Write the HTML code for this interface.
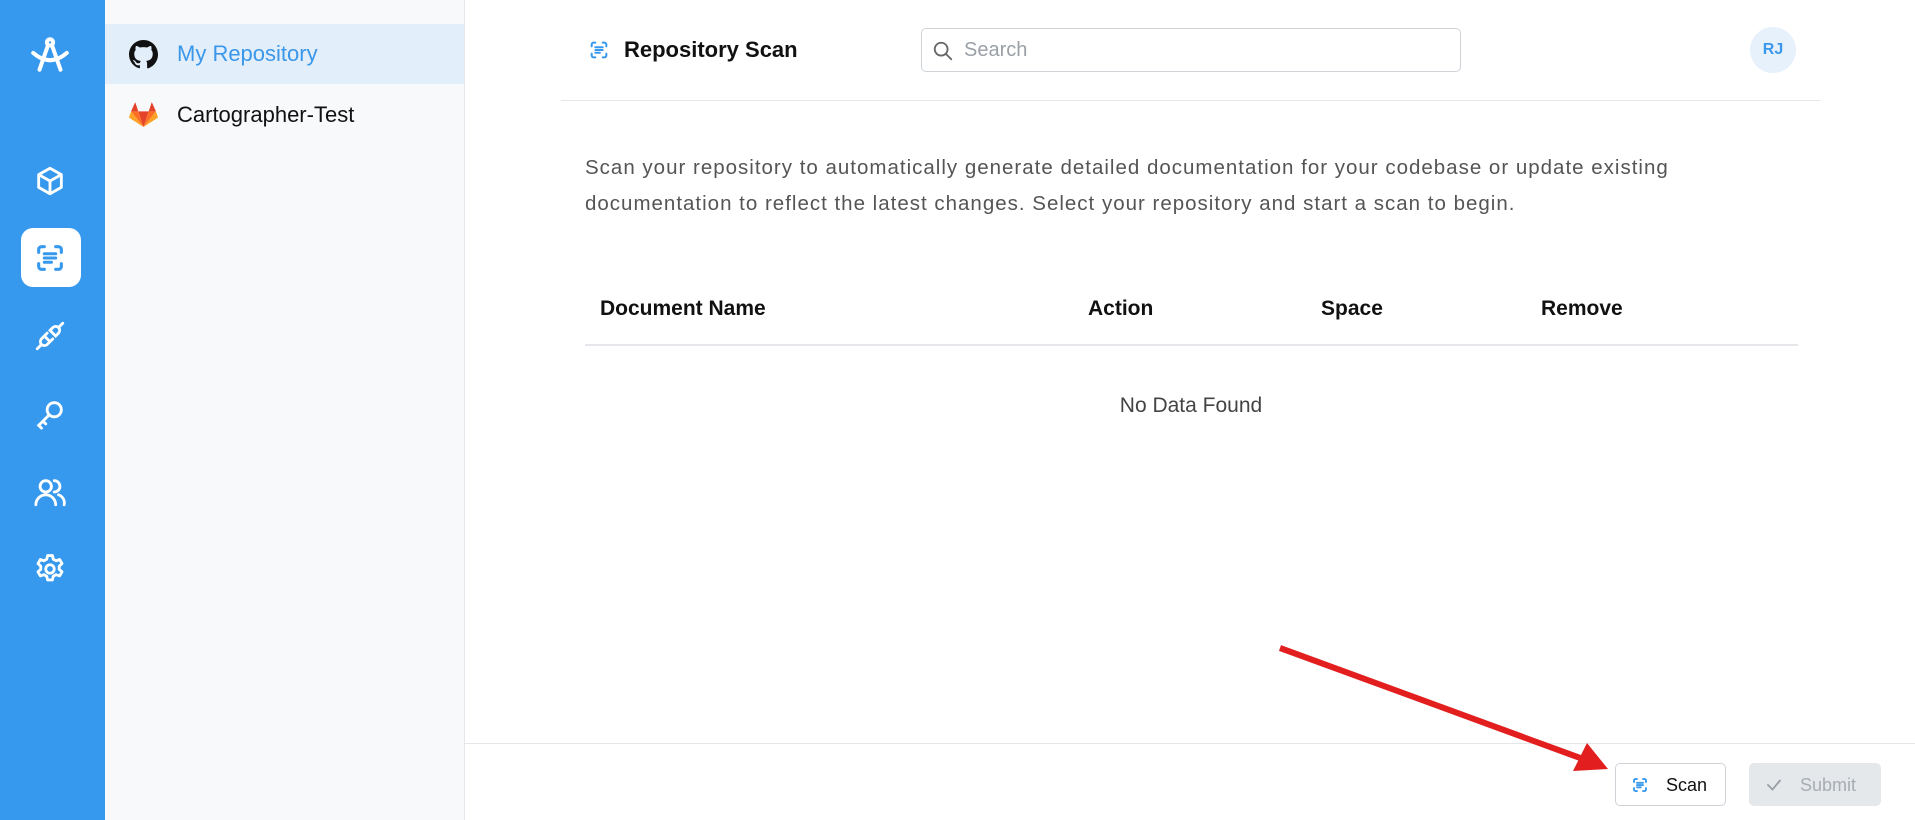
<!DOCTYPE html>
<html><head><meta charset="utf-8"><style>
*{box-sizing:border-box;margin:0;padding:0}
body{width:1915px;height:820px;overflow:hidden;background:#fff;font-family:"Liberation Sans",sans-serif;position:relative}
.abs{position:absolute}
.sb{left:0;top:0;width:105px;height:820px;background:#3799ee}
.ic{position:absolute;left:33px;width:34px;height:34px}
.panel{left:105px;top:0;width:360px;height:820px;background:#f7f9fb;border-right:1px solid #e3e6ea}
.th{position:absolute;top:297px;font-size:21px;font-weight:bold;color:#111}
</style></head><body>
<div class="abs sb">
<svg class="ic" style="top:34px;left:29px;width:42px;height:42px" viewBox="0 0 40 40" fill="none" stroke="#fff" stroke-width="3.8" stroke-linecap="round"><circle cx="20" cy="8" r="3"/><path d="M18 11 L10 34 M22 11 L30 34 M4 18 Q20 32 36 18"/></svg>
<svg class="ic" style="top:164px" viewBox="0 0 24 24" fill="none" stroke="#fff" stroke-width="2" stroke-linejoin="round"><path d="M12 3l8 4.5v9L12 21l-8-4.5v-9z M4 7.5l8 4.5 8-4.5 M12 12v9"/></svg>
<div class="abs" style="left:21px;top:228px;width:60px;height:59px;background:#fff;border-radius:12px"></div>
<svg class="ic" style="top:241px" viewBox="0 0 24 24" fill="none" stroke="#3799ee" stroke-width="2.2" stroke-linecap="round"><path d="M4 8V6a2 2 0 0 1 2-2h2M16 4h2a2 2 0 0 1 2 2v2M20 16v2a2 2 0 0 1-2 2h-2M8 20H6a2 2 0 0 1-2-2v-2M8 9h8M8 12h8M8 15h5"/></svg>
<svg class="ic" style="top:319px" viewBox="0 0 24 24" fill="none" stroke="#fff" stroke-width="2" stroke-linecap="round"><path d="M3 21l3-3M21 3l-3 3M6 18a3 3 0 0 1 0-4l2-2 4 4-2 2a3 3 0 0 1-4 0zM18 6a3 3 0 0 1 0 4l-2 2-4-4 2-2a3 3 0 0 1 4 0zM8 12l2-2M12 16l2-2"/></svg>
<svg class="ic" style="top:397px" viewBox="0 0 24 24" fill="none" stroke="#fff" stroke-width="2" stroke-linecap="round"><circle cx="15" cy="9" r="5"/><path d="M11.5 12.5L4 20l2 2M7 17l2 2"/></svg>
<svg class="ic" style="top:475px" viewBox="0 0 24 24" fill="none" stroke="#fff" stroke-width="2" stroke-linecap="round"><circle cx="9" cy="8" r="4"/><path d="M2 21a7 7 0 0 1 14 0M15 4a4 4 0 0 1 0 8M18 14a6 6 0 0 1 4 7"/></svg>
<svg class="ic" style="top:552px" viewBox="0 0 24 24" fill="none" stroke="#fff" stroke-width="2" stroke-linejoin="round"><circle cx="12" cy="12" r="3"/><path d="M10.3 2.5h3.4l.6 2.6 2 1.1 2.5-.9 1.7 2.9-2 1.8v2.2l2 1.8-1.7 2.9-2.5-.9-2 1.1-.6 2.6h-3.4l-.6-2.6-2-1.1-2.5.9-1.7-2.9 2-1.8v-2.2l-2-1.8 1.7-2.9 2.5.9 2-1.1z"/></svg>
</div>
<div class="abs panel">
<div class="abs" style="left:0;top:24px;width:359px;height:60px;background:#e2eef9"></div>
<svg class="abs" style="left:24px;top:40px" width="29" height="29" viewBox="0 0 16 16"><path fill="#111" d="M8 0C3.58 0 0 3.58 0 8c0 3.54 2.29 6.53 5.47 7.59.4.07.55-.17.55-.38v-1.33c-2.23.48-2.7-1.07-2.7-1.07-.36-.93-.89-1.17-.89-1.17-.73-.5.06-.49.06-.49.8.06 1.230.83 1.23.83.71 1.23 1.87.87 2.33.66.07-.52.28-.87.5-1.07-1.78-.2-3.65-.89-3.65-3.95 0-.87.31-1.59.82-2.15-.08-.2-.36-1.02.08-2.12 0 0 .67-.21 2.2.82A7.7 7.7 0 0 1 8 3.9c.68 0 1.36.09 2 .27 1.53-1.04 2.2-.82 2.2-.82.44 1.1.16 1.92.08 2.12.51.56.82 1.27.82 2.15 0 3.07-1.87 3.75-3.65 3.95.29.25.54.73.54 1.48v2.2c0 .21.15.46.55.38A8 8 0 0 0 16 8c0-4.42-3.58-8-8-8z"/></svg>
<div class="abs" style="left:72px;top:41px;font-size:22px;color:#3a97ea">My Repository</div>
<svg class="abs" style="left:24px;top:100px" width="29" height="27" viewBox="0 0 28 26"><path fill="#e24329" d="M14 26L19 11H9z"/><path fill="#fc6d26" d="M14 26L9 11H2z M14 26l5-15h7z"/><path fill="#fca326" d="M2 11L0 17l14 9z M26 11l2 6-14 9z"/><path fill="#e24329" d="M2 11h7L6 2z M26 11h-7l3-9z"/></svg>
<div class="abs" style="left:72px;top:102px;font-size:22px;color:#111">Cartographer-Test</div>
</div>
<svg class="abs" style="left:588px;top:39px" width="22" height="22" viewBox="0 0 24 24" fill="none" stroke="#3799ee" stroke-width="2.2" stroke-linecap="round"><path d="M4 8V6a2 2 0 0 1 2-2h2M16 4h2a2 2 0 0 1 2 2v2M20 16v2a2 2 0 0 1-2 2h-2M8 20H6a2 2 0 0 1-2-2v-2M8 9h8M8 12h8M8 15h5"/></svg>
<div class="abs" style="left:624px;top:37px;font-size:22px;font-weight:bold;color:#111">Repository Scan</div>
<div class="abs" style="left:921px;top:28px;width:540px;height:44px;border:1px solid #cfd3d8;border-radius:5px"></div>
<svg class="abs" style="left:932px;top:40px" width="22" height="22" viewBox="0 0 24 24" fill="none" stroke="#666" stroke-width="2" stroke-linecap="round"><circle cx="10" cy="10" r="7"/><path d="M15 15l6 6"/></svg>
<div class="abs" style="left:964px;top:39px;font-size:20px;color:#9aa0a6">Search</div>
<div class="abs" style="left:1750px;top:27px;width:46px;height:46px;border-radius:50%;background:#e6f1fc;color:#3a97ea;font-size:16px;font-weight:bold;text-align:center;line-height:46px">RJ</div>
<div class="abs" style="left:561px;top:100px;width:1259px;height:1px;background:#e5e7eb"></div>
<div class="abs" style="left:585px;top:150px;width:1150px;font-size:20.5px;line-height:36px;letter-spacing:1px;color:#555">Scan your repository to automatically generate detailed documentation for your codebase or update existing documentation to reflect the latest changes. Select your repository and start a scan to begin.</div>
<div class="th" style="left:600px">Document Name</div>
<div class="th" style="left:1088px">Action</div>
<div class="th" style="left:1321px">Space</div>
<div class="th" style="left:1541px">Remove</div>
<div class="abs" style="left:585px;top:344px;width:1213px;height:2px;background:#e5e7eb"></div>
<div class="abs" style="left:1091px;top:394px;width:200px;text-align:center;font-size:21px;color:#444">No Data Found</div>
<div class="abs" style="left:465px;top:743px;width:1450px;height:1px;background:#e5e7eb"></div>
<div class="abs" style="left:1615px;top:763px;width:111px;height:43px;border:1px solid #cfd3d8;border-radius:5px;background:#fff"></div>
<svg class="abs" style="left:1631px;top:776px" width="18" height="18" viewBox="0 0 24 24" fill="none" stroke="#3799ee" stroke-width="2.5" stroke-linecap="round"><path d="M4 8V6a2 2 0 0 1 2-2h2M16 4h2a2 2 0 0 1 2 2v2M20 16v2a2 2 0 0 1-2 2h-2M8 20H6a2 2 0 0 1-2-2v-2M8 9h8M8 12h8M8 15h5"/></svg>
<div class="abs" style="left:1666px;top:775px;font-size:18px;color:#111">Scan</div>
<div class="abs" style="left:1749px;top:763px;width:132px;height:43px;border-radius:5px;background:#e5e8eb"></div>
<svg class="abs" style="left:1765px;top:776px" width="18" height="18" viewBox="0 0 24 24" fill="none" stroke="#9aa0a6" stroke-width="2.5" stroke-linecap="round"><path d="M4 12l6 6 10-12"/></svg>
<div class="abs" style="left:1800px;top:775px;font-size:18px;color:#a8adb3">Submit</div>
<svg class="abs" style="left:0;top:0" width="1915" height="820"><line x1="1280" y1="648" x2="1583" y2="759" stroke="#e31e1e" stroke-width="6"/><path d="M1608 769 L1573 771 L1587 743 Z" fill="#e31e1e"/></svg>
</body></html>
